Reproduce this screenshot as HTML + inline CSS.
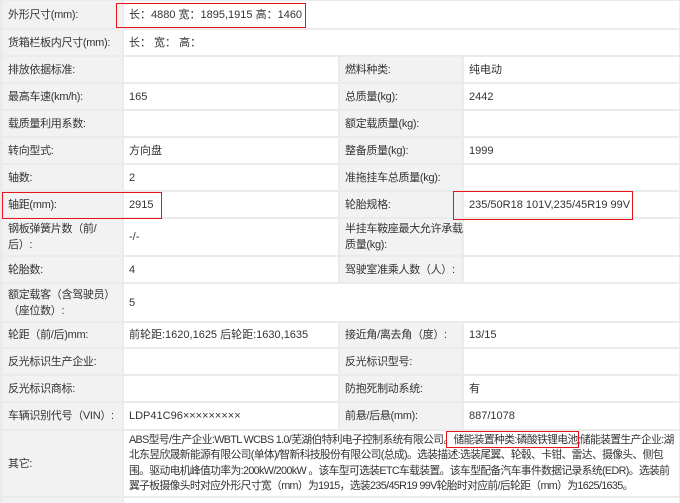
<!DOCTYPE html>
<html><head><meta charset="utf-8"><style>
html,body{margin:0;padding:0}
body{width:680px;height:501px;background:#ebebeb;position:relative;overflow:hidden;font-family:"Liberation Sans","Noto Sans CJK SC",sans-serif;font-size:11px;color:#333}
.c{position:absolute;box-sizing:border-box;display:flex;align-items:center;padding-left:5px;line-height:16px;background:#fff;white-space:nowrap}
.l{background:#f2f2f2;letter-spacing:-0.3px}
.r{position:absolute;border:1px solid #e8141a;box-sizing:border-box}
</style></head><body>
<div id="g"></div>
<script>
var rows=[
[1,28,"外形尺寸(mm):","长：4880 宽：1895,1915 高：1460",null,null],
[30,55,"货箱栏板内尺寸(mm):","长：&nbsp;宽：&nbsp;高：",null,null],
[57,82,"排放依据标准:","","燃料种类:","纯电动"],
[84,109,"最高车速(km/h):","165","总质量(kg):","2442"],
[111,136,"载质量利用系数:","","额定载质量(kg):",""],
[138,163,"转向型式:","方向盘","整备质量(kg):","1999"],
[165,190,"轴数:","2","准拖挂车总质量(kg):",""],
[192,217,"轴距(mm):","2915","轮胎规格:","235/50R18 101V,235/45R19 99V"],
[219,255,"钢板弹簧片数（前/<br>后）:","-/-","半挂车鞍座最大允许承载<br>质量(kg):",""],
[257,282,"轮胎数:","4","驾驶室准乘人数（人）:",""],
[284,321,"额定载客（含驾驶员）<br>（座位数）:","5",null,null],
[323,347,"轮距（前/后)mm:","前轮距:1620,1625 后轮距:1630,1635","接近角/离去角（度）:","13/15"],
[349,374,"反光标识生产企业:","","反光标识型号:",""],
[376,401,"反光标识商标:","","防抱死制动系统:","有"],
[403,429,"车辆识别代号（VIN）:","LDP41C96×××××××××","前悬/后悬(mm):","887/1078"]
];
var h="";
rows.forEach(function(r){
var t=r[0],ht=r[1]-r[0];
h+='<div class="c l" style="left:3px;top:'+t+'px;width:119px;height:'+ht+'px"><span>'+r[2]+'</span></div>';
if(r[4]===null){
h+='<div class="c" style="left:124px;top:'+t+'px;width:555px;height:'+ht+'px">'+r[3]+'</div>';
}else{
h+='<div class="c" style="left:124px;top:'+t+'px;width:214px;height:'+ht+'px">'+r[3]+'</div>';
h+='<div class="c l" style="left:340px;top:'+t+'px;width:122px;height:'+ht+'px"><span>'+r[4]+'</span></div>';
h+='<div class="c" style="left:464px;top:'+t+'px;width:215px;height:'+ht+'px">'+r[5]+'</div>';
}
});
h+='<div class="c l" style="left:3px;top:431px;width:119px;height:65px">其它:</div>';
h+='<div class="c" style="left:124px;top:431px;width:555px;height:65px;line-height:15.3px;font-size:10.8px;letter-spacing:-0.65px;overflow:hidden"><span>ABS型号/生产企业:WBTL WCBS 1.0/芜湖伯特利电子控制系统有限公司。储能装置种类:磷酸铁锂电池;储能装置生产企业:湖<br>北东昱欣晟新能源有限公司(单体)/智新科技股份有限公司(总成)。选装描述:选装尾翼、轮毂、卡钳、雷达、摄像头、侧包<br>围。驱动电机峰值功率为:200kW/200kW 。该车型可选装ETC车载装置。该车型配备汽车事件数据记录系统(EDR)。选装前<br>翼子板摄像头时对应外形尺寸宽（mm）为1915，选装235/45R19 99V轮胎时对应前/后轮距（mm）为1625/1635。</span></div>';
h+='<div class="c" style="left:124px;top:498px;width:555px;height:5px"></div><div class="c l" style="left:3px;top:498px;width:119px;height:5px"></div>';
h+='<div class="r" style="left:116px;top:3px;width:190px;height:25px"></div>';
h+='<div class="r" style="left:2px;top:192px;width:160px;height:27px"></div>';
h+='<div class="r" style="left:453px;top:191px;width:180px;height:29px"></div>';
h+='<div class="r" style="left:446px;top:431px;width:133px;height:17px"></div>';
document.getElementById("g").innerHTML=h;
</script>
</body></html>
